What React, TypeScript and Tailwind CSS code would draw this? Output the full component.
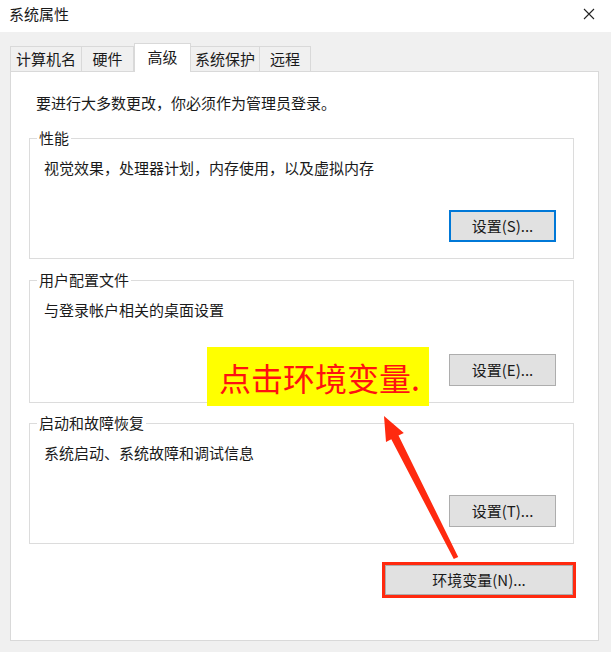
import React from 'react'

const tabs = [
  { label: '计算机名', w: 'w-[72px]' },
  { label: '硬件', w: 'w-[53px]' },
  { label: '高级', w: 'w-[57px]', active: true },
  { label: '系统保护', w: 'w-[70px]' },
  { label: '远程', w: 'w-[52px]' },
]

type GroupProps = {
  legend: string
  desc: string
  button: string
  focused?: boolean
  height: string
  top: string
}

const GroupBox: React.FC<GroupProps> = ({ legend, desc, button, focused, height, top }) => (
  <div className={`relative ml-[18px] w-[545px] ${height} ${top} border border-[#dcdcdc] flex flex-col`}>
    <span className="absolute left-[7px] top-[-11px] px-[2px] bg-white leading-[20px]">{legend}</span>
    <div className="pl-[14px] pt-[19px] leading-[20px]">{desc}</div>
    <button
      className={`mt-auto self-end mr-[17px] mb-[16px] w-[107px] h-[32px] bg-[#e1e1e1] leading-[20px] ${
        focused ? 'border-2 border-[#0078d7]' : 'border border-[#adadad]'
      }`}
    >
      {button}
    </button>
  </div>
)

export default function App() {
  return (
    <div
      className="relative w-[611px] h-[652px] bg-[#f0f0f0] text-[15px] text-[#1a1a1a] overflow-hidden"
      style={{ fontFamily: '"Noto Sans CJK SC", "Noto Sans", sans-serif' }}
    >
      {/* title bar */}
      <div className="h-[32px] bg-white flex items-center justify-between pl-[9px] pr-[16px]">
        <span className="leading-[20px] -mt-[4px]">系统属性</span>
        <svg width="12" height="12" viewBox="0 0 12 12" className="-mt-[4px]">
          <path d="M1 1L11 11M11 1L1 11" stroke="#222" strokeWidth="1.1" />
        </svg>
      </div>

      <div className="pl-[10px] pr-[13px] pt-[11px]">
        {/* tabs */}
        <div className="flex items-end h-[28px]">
          {tabs.map((t) =>
            t.active ? (
              <div
                key={t.label}
                className={`relative z-10 ${t.w} h-[29px] -mb-[1px] bg-white border-t border-l border-r border-[#d9d9d9] flex justify-center pt-[3px] leading-[20px]`}
              >
                {t.label}
              </div>
            ) : (
              <div
                key={t.label}
                className={`${t.w} h-[25px] border-t border-l border-r border-[#d9d9d9] -ml-px first:ml-0 flex justify-center pt-[2px] leading-[20px]`}
              >
                {t.label}
              </div>
            )
          )}
        </div>

        {/* panel */}
        <div className="w-[589px] h-[570px] bg-white border border-[#d9d9d9] flex flex-col">
          <div className="pl-[25px] pt-[21px] leading-[20px]">要进行大多数更改，你必须作为管理员登录。</div>

          <GroupBox
            legend="性能"
            desc="视觉效果，处理器计划，内存使用，以及虚拟内存"
            button="设置(S)..."
            focused
            height="h-[121px]"
            top="mt-[25px]"
          />
          <GroupBox
            legend="用户配置文件"
            desc="与登录帐户相关的桌面设置"
            button="设置(E)..."
            height="h-[123px]"
            top="mt-[21px]"
          />
          <GroupBox
            legend="启动和故障恢复"
            desc="系统启动、系统故障和调试信息"
            button="设置(T)..."
            height="h-[121px]"
            top="mt-[20px]"
          />

          <div className="flex justify-end mt-[18px] mr-[22px]">
            <div className="border-[3px] border-[#ff2a0f] w-[194px] h-[36px]">
              <button className="w-full h-full bg-[#e1e1e1] border border-[#adadad] leading-[20px]">
                环境变量(N)...
              </button>
            </div>
          </div>
        </div>
      </div>

      {/* annotation */}
      <div className="absolute left-[207px] top-[347px] w-[222px] h-[59px] bg-[#ffff00] flex items-center pl-[12px]">
        <span className="text-[32px] leading-[40px] text-[#ff1111]">点击环境变量.</span>
      </div>
      <svg className="absolute left-0 top-0 pointer-events-none" width="611" height="652" viewBox="0 0 611 652">
        <polygon
          points="384,416 403.8,432.9 398.5,435.6 458.2,556.9 453.8,559.1 391.3,439.2 386,441.9"
          fill="#ff2a0f"
        />
      </svg>
    </div>
  )
}
